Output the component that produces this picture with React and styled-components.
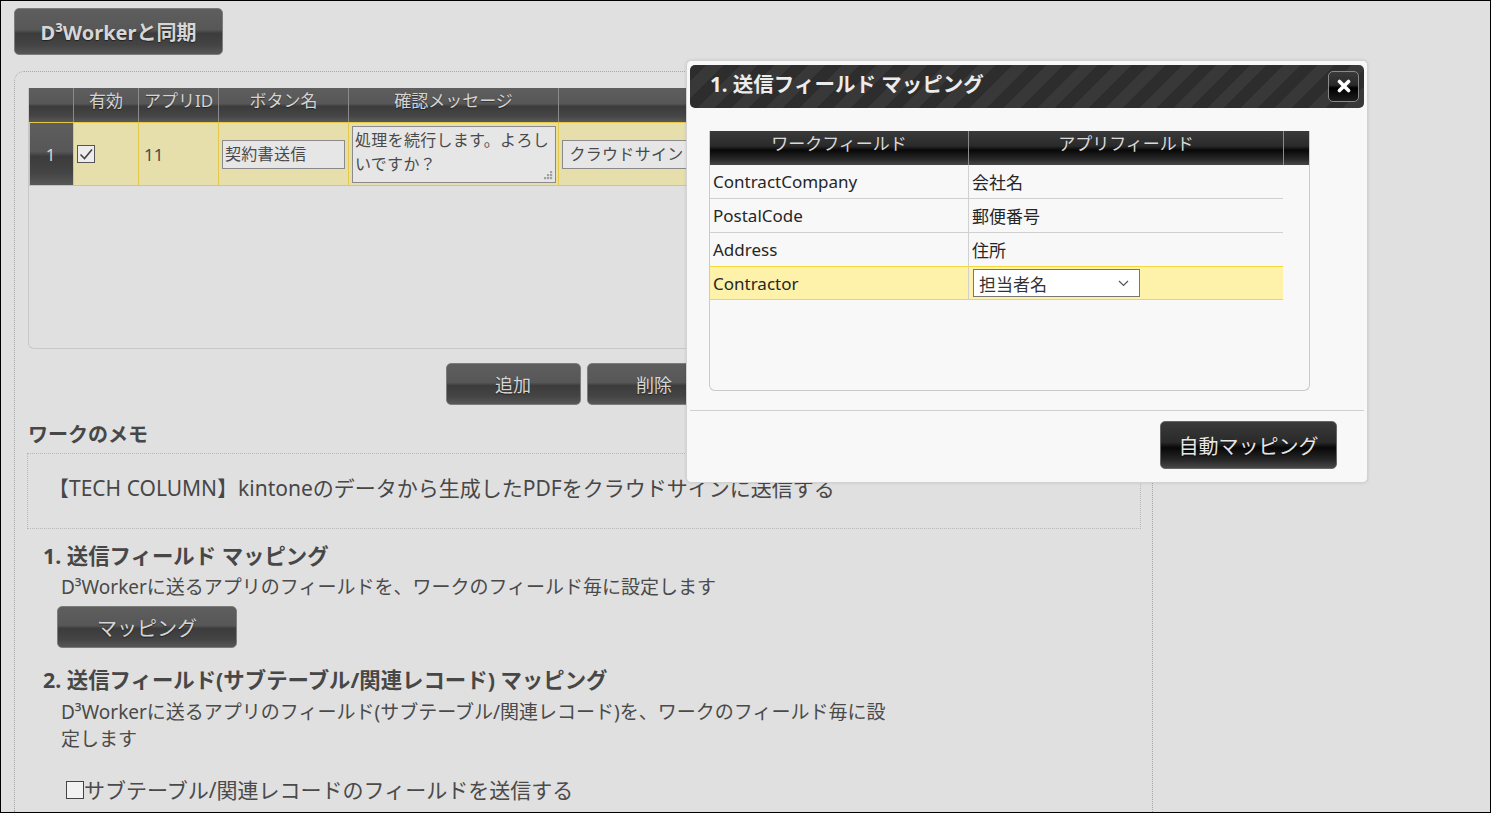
import React from 'react';
import styled, { createGlobalStyle } from 'styled-components';

const FONT = `"Noto Sans", "Noto Sans CJK JP", sans-serif`;

const Global = createGlobalStyle`
  html, body { margin: 0; padding: 0; background: #e0e0e0; }
  body { font-family: ${FONT}; }
  * { box-sizing: border-box; }
`;

const greyGrad = `linear-gradient(to bottom, #5e5e5e 0%, #575757 46%, #3c3c3c 54%, #444 80%, #575757 100%)`;
const blackGrad = `linear-gradient(to bottom, #3a3a3a 0%, #2a2a2a 44%, #080808 56%, #262626 82%, #474747 100%)`;

const Frame = styled.div`
  position: relative;
  width: 1491px;
  height: 813px;
  border: 1px solid #000;
  background: #e0e0e0;
  overflow: hidden;
  display: flex;
  flex-direction: column;
  padding: 7px 0 0 13px;
  font-family: ${FONT};
`;

const GreyButton = styled.button`
  flex: none;
  width: ${p => p.$w}px;
  height: ${p => p.$h}px;
  background: ${greyGrad};
  border: 1px solid #7c7c7c;
  border-radius: 5px;
  color: #d6d6d6;
  font-family: ${FONT};
  font-size: ${p => p.$size || 18}px;
  font-weight: ${p => (p.$bold ? 700 : 400)};
  text-shadow: 0 1px 1px rgba(0, 0, 0, 0.5);
  padding: 0;
  cursor: pointer;
`;

const MainPanel = styled.div`
  flex: 1;
  margin-top: 16px;
  width: 1139px;
  border-top: 1px dotted #a8a8a8;
  border-left: 1px dotted #a8a8a8;
  border-right: 1px dotted #a8a8a8;
  border-top-left-radius: 10px;
  padding: 15px 0 0 13px;
  color: #474747;
`;

const TableBox = styled.div`
  width: 1113px;
  height: 261px;
  border: 1px solid #c8c8c8;
  border-top: none;
  border-radius: 0 0 6px 6px;
  margin-top: 1px;
`;

const cols = `44px 65px 80px 130px 210px 1fr`;

const HeadRow = styled.div`
  display: grid;
  grid-template-columns: ${cols};
  height: 34px;
  background: ${greyGrad};
`;

const HeadCell = styled.div`
  border-left: ${p => (p.$first ? 'none' : '1px solid #8a8a8a')};
  color: #d4d4d4;
  font-size: 17px;
  line-height: 26px;
  text-align: center;
  text-shadow: 0 1px 1px rgba(0, 0, 0, 0.4);
  white-space: nowrap;
  overflow: hidden;
`;

const DataRow = styled.div`
  display: grid;
  grid-template-columns: ${cols};
  height: 64px;
  background: #e6dfac;
  border-top: 1px solid #e3c84a;
  border-bottom: 1px solid #e3c84a;
`;

const DataCell = styled.div`
  display: flex;
  align-items: center;
  padding-left: ${p => p.$pad ?? 4}px;
  border-left: ${p => (p.$first ? 'none' : '1px solid #e3c84a')};
  font-size: 17px;
  color: #4a4a4a;
`;

const NumCell = styled.div`
  background: ${greyGrad};
  color: #d6d6d6;
  font-size: 17px;
  display: flex;
  align-items: center;
  justify-content: center;
  padding-right: 2px;
  border-left: 1px solid #e3c84a;
`;

const TextInput = styled.div`
  width: ${p => p.$w}px;
  flex: none;
  height: 29px;
  background: #e6e6e6;
  border: 1px solid #8a8a8a;
  font-size: 16px;
  letter-spacing: 0.3px;
  line-height: 26px;
  padding-left: 2px;
  color: #4a4a4a;
  white-space: nowrap;
  overflow: hidden;
`;

const TextArea = styled.div`
  position: relative;
  width: 204px;
  height: 57px;
  background: #e6e6e6;
  border: 1px solid #8a8a8a;
  font-size: 16px;
  letter-spacing: 0.3px;
  line-height: 24px;
  padding: 1px 2px;
  color: #4a4a4a;
`;

const Grip = styled.svg`
  position: absolute;
  right: 2px;
  bottom: 2px;
`;

const CheckBox = styled.span`
  display: inline-flex;
  align-items: center;
  justify-content: center;
  width: 18px;
  height: 18px;
  background: ${p => p.$bg || '#ededed'};
  border: 1px solid ${p => p.$border || '#555'};
  flex: none;
`;

const ButtonRow = styled.div`
  width: 1113px;
  display: flex;
  justify-content: center;
  gap: 6px;
  margin-top: 14px;
  padding-right: 2px;
`;

const SectionTitle = styled.div`
  font-size: ${p => p.$size || 21.4}px;
  font-weight: 700;
  line-height: 30px;
  color: #474747;
  margin-top: ${p => p.$mt || 0}px;
  white-space: nowrap;
`;

const MemoBox = styled.div`
  margin-left: -1px;
  margin-top: 3px;
  width: 1114px;
  height: 76px;
  border: 1px dotted #b8b8b8;
  padding: 19px 0 0 20px;
  font-size: 21px;
  line-height: 30px;
  color: #474747;
`;

const Section = styled.div`
  padding-left: 15px;
`;

const Desc = styled.div`
  padding-left: 18px;
  width: ${p => p.$w || 900}px;
  font-size: 19px;
  line-height: 27px;
  margin-top: ${p => p.$mt || 0}px;
  color: #4a4a4a;
`;

const MapButtonWrap = styled.div`
  margin: 5px 0 0 14px;
`;

const CheckLine = styled.label`
  display: flex;
  align-items: center;
  margin: 23px 0 0 23px;
  font-size: 21px;
  line-height: 28px;
  color: #4a4a4a;
`;

/* ---------- dialog ---------- */

const Dialog = styled.div`
  position: absolute;
  left: 685px;
  top: 59px;
  width: 682px;
  height: 423px;
  background: #f8f8f8;
  border: 1px solid #d2d2d2;
  border-radius: 5px;
  padding: 4px 3px 3px;
  box-shadow: 0 0 3px rgba(0, 0, 0, 0.12);
  font-family: ${FONT};
`;

const DialogHeader = styled.div`
  height: 43px;
  border-radius: 5px;
  background: repeating-linear-gradient(135deg, #2d2d2d 0px, #2d2d2d 12px, #383838 12px, #383838 24px);
  display: flex;
  align-items: center;
  justify-content: space-between;
  padding: 0 5px 0 20px;
`;

const DialogTitle = styled.div`
  color: #ececec;
  font-size: 20.5px;
  font-weight: 700;
  margin-top: -7px;
`;

const CloseBtn = styled.button`
  width: 31px;
  height: 31px;
  border-radius: 5px;
  border: 1px solid #8a8a8a;
  background: linear-gradient(to bottom, #3a3a3a 0%, #2a2a2a 45%, #000 55%, #1d1d1d 100%);
  display: flex;
  align-items: center;
  justify-content: center;
  padding: 0;
  margin-top: -1px;
`;

const MapBox = styled.div`
  margin: 23px 0 0 19px;
  width: 601px;
  height: 260px;
  border: 1px solid #cacaca;
  border-top: none;
  border-radius: 0 0 6px 6px;
`;

const mapCols = `258px 315px 1fr`;

const MapHead = styled.div`
  display: grid;
  grid-template-columns: ${mapCols};
  height: 34px;
  background: ${blackGrad};
`;

const MapHeadCell = styled.div`
  border-left: ${p => (p.$first ? 'none' : '1px solid #8a8a8a')};
  color: #dadada;
  font-size: 17px;
  line-height: 26px;
  text-align: center;
`;

const MapRow = styled.div`
  display: grid;
  grid-template-columns: 258px 315px;
  height: 34px;
  background: ${p => (p.$active ? '#fef1a9' : 'transparent')};
  border-bottom: 1px solid ${p => (p.$active ? '#f3d73c' : '#d0d0d0')};
  border-top: ${p => (p.$active ? '1px solid #f3d73c' : 'none')};
  margin-top: ${p => (p.$active ? '-1px' : '0')};
  width: 573px;
`;

const MapCell = styled.div`
  display: flex;
  align-items: center;
  padding-left: 3px;
  border-left: ${p => (p.$first ? 'none' : '1px solid #d0d0d0')};
  font-size: 17px;
  color: #262626;
  white-space: nowrap;
`;

const Select = styled.div`
  width: 167px;
  height: 28px;
  margin-left: 1px;
  background: #fff;
  border: 1px solid #777;
  display: flex;
  align-items: center;
  justify-content: space-between;
  padding: 0 10px 0 5px;
  font-size: 17px;
  color: #333;
`;

const DialogFooter = styled.div`
  margin-top: 19px;
  border-top: 1px solid #d0d0d0;
  display: flex;
  justify-content: flex-end;
  padding: 10px 27px 0 0;
`;

const BlackButton = styled.button`
  width: 177px;
  height: 48px;
  background: ${blackGrad};
  border: 1px solid #666;
  border-radius: 5px;
  color: #e6e6e6;
  font-family: ${FONT};
  font-size: 20px;
  padding: 0;
  text-shadow: 0 1px 1px rgba(0, 0, 0, 0.6);
`;

const Check = () => (
  <svg width="16" height="16" viewBox="0 0 16 16">
    <polyline points="2.5,8.5 6.5,12.5 14,3.5" fill="none" stroke="#444" strokeWidth="1.6" />
  </svg>
);

const GripIcon = () => (
  <Grip width="9" height="9" viewBox="0 0 9 9">
    {[[6, 0], [3, 3], [6, 3], [0, 6], [3, 6], [6, 6]].map(([x, y]) => (
      <rect key={`${x}-${y}`} x={x} y={y} width="2.2" height="2.2" fill="#a0a0a0" />
    ))}
  </Grip>
);

const CloseIcon = () => (
  <svg width="14" height="14" viewBox="0 0 14 14">
    <path d="M2.5 2.5 L11.5 11.5 M11.5 2.5 L2.5 11.5" stroke="#fff" strokeWidth="3.6" strokeLinecap="round" />
  </svg>
);

const Chevron = () => (
  <svg width="11" height="7" viewBox="0 0 11 7">
    <polyline points="1,1 5.5,5.5 10,1" fill="none" stroke="#555" strokeWidth="1.2" />
  </svg>
);

const mapRows = [
  ['ContractCompany', '会社名'],
  ['PostalCode', '郵便番号'],
  ['Address', '住所'],
];

export default function App() {
  return (
    <>
      <Global />
      <Frame>
        <GreyButton $w={209} $h={47} $size={20} $bold>D³Workerと同期</GreyButton>
        <MainPanel>
          <TableBox>
            <HeadRow>
              <HeadCell $first />
              <HeadCell>有効</HeadCell>
              <HeadCell>アプリID</HeadCell>
              <HeadCell>ボタン名</HeadCell>
              <HeadCell>確認メッセージ</HeadCell>
              <HeadCell />
            </HeadRow>
            <DataRow>
              <NumCell>1</NumCell>
              <DataCell $pad={3}>
                <CheckBox><Check /></CheckBox>
              </DataCell>
              <DataCell $pad={5}>11</DataCell>
              <DataCell $pad={3}>
                <TextInput $w={123}>契約書送信</TextInput>
              </DataCell>
              <DataCell $pad={3}>
                <TextArea>
                  処理を続行します。よろしいですか？
                  <GripIcon />
                </TextArea>
              </DataCell>
              <DataCell $pad={3}>
                <TextInput $w={200}>&nbsp;クラウドサイン</TextInput>
              </DataCell>
            </DataRow>
          </TableBox>
          <ButtonRow>
            <GreyButton $w={135} $h={42}>追加</GreyButton>
            <GreyButton $w={135} $h={42}>削除</GreyButton>
          </ButtonRow>
          <SectionTitle $mt={15} $size={20}>ワークのメモ</SectionTitle>
          <MemoBox>【TECH COLUMN】kintoneのデータから生成したPDFをクラウドサインに送信する</MemoBox>
          <Section>
            <SectionTitle $mt={12}>1. 送信フィールド マッピング</SectionTitle>
            <Desc $mt={3}>D³Workerに送るアプリのフィールドを、ワークのフィールド毎に設定します</Desc>
            <MapButtonWrap>
              <GreyButton $w={180} $h={42} $size={20}>マッピング</GreyButton>
            </MapButtonWrap>
            <SectionTitle $mt={17}>2. 送信フィールド(サブテーブル/関連レコード) マッピング</SectionTitle>
            <Desc $mt={4} $w={860}>D³Workerに送るアプリのフィールド(サブテーブル/関連レコード)を、ワークのフィールド毎に設定します</Desc>
            <CheckLine>
              <CheckBox $bg="#f2f2f2" $border="#444" />
              サブテーブル/関連レコードのフィールドを送信する
            </CheckLine>
          </Section>
        </MainPanel>

        <Dialog>
          <DialogHeader>
            <DialogTitle>1. 送信フィールド マッピング</DialogTitle>
            <CloseBtn><CloseIcon /></CloseBtn>
          </DialogHeader>
          <MapBox>
            <MapHead>
              <MapHeadCell $first>ワークフィールド</MapHeadCell>
              <MapHeadCell>アプリフィールド</MapHeadCell>
              <MapHeadCell />
            </MapHead>
            {mapRows.map(([a, b]) => (
              <MapRow key={a}>
                <MapCell $first>{a}</MapCell>
                <MapCell>{b}</MapCell>
              </MapRow>
            ))}
            <MapRow $active>
              <MapCell $first>Contractor</MapCell>
              <MapCell>
                <Select>
                  担当者名
                  <Chevron />
                </Select>
              </MapCell>
            </MapRow>
          </MapBox>
          <DialogFooter>
            <BlackButton>自動マッピング</BlackButton>
          </DialogFooter>
        </Dialog>
      </Frame>
    </>
  );
}
